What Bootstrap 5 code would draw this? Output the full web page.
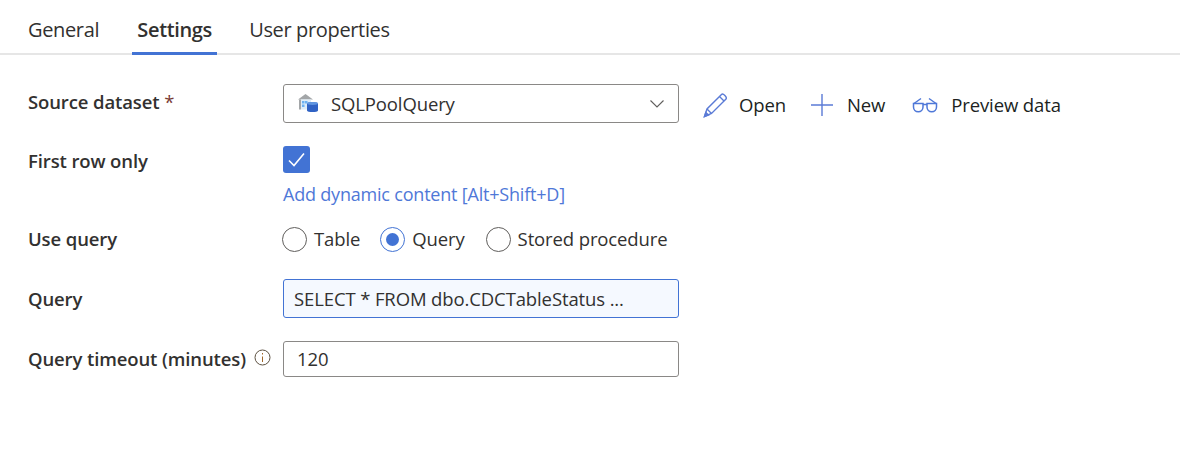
<!DOCTYPE html>
<html lang="en">
<head>
  <meta charset="UTF-8">
  <meta name="viewport" content="width=device-width, initial-scale=1.0">
  <title>Settings</title>
  <link href="https://cdn.jsdelivr.net/npm/bootstrap@5.3.0/dist/css/bootstrap.min.css" rel="stylesheet">
  <style>
    body {
      font-family: "Open Sans", "Liberation Sans", sans-serif;
      font-size: 18.5px;
      letter-spacing: -0.12px;
      color: #323130;
      background: #fff;
    }
    .tab-bar {
      height: 55px;
      padding-left: 14px;
      border-bottom: 2px solid #e6e6e6;
    }
    .tab-item {
      height: 55px;
      padding: 17px 14px 0;
      margin-right: 19px;
      color: #323130;
      font-size: 20px;
      letter-spacing: -0.35px;
      text-decoration: none;
      line-height: 26px;
    }
    .tab-item.on {
      font-weight: 600;
      border-bottom: 3px solid #4273d4;
      padding-left: 0;
      padding-right: 0;
      width: 85px;
      text-align: center;
      margin-right: 18px;
    }
    .form-area { padding: 29px 0 0 28px; }
    .field-label {
      width: 255px;
      flex: none;
      font-weight: 600;
      line-height: 24px;
      color: #323130;
    }
    .req { color: #7a3b36; font-weight: 400; }
    .ctl-box {
      width: 396px;
      flex: none;
      border: 1px solid #8a8886;
      border-radius: 3px;
      background: #fff;
      padding: 0 10px;
      line-height: 24px;
    }
    .row-source { height: 39px; margin-bottom: 23px; }
    .row-source .ctl-box { height: 39px; padding: 0 14px; }
    .row-check .field-label { margin-top: 3px; }
    .row-use { height: 24px; margin-top: 21px; }
    .row-query { height: 39px; margin-top: 28px; }
    .row-query .ctl-box { height: 39px; background: #f5f9ff; border-color: #4273d4; }
    .row-timeout { height: 36px; margin-top: 23px; }
    .row-timeout .ctl-box { height: 36px; padding-left: 13px; }
    .check-on {
      width: 27px;
      height: 27px;
      background: #4273d4;
      border-radius: 3px;
    }
    .dyn-link {
      display: block;
      margin-top: 9px;
      color: #4f78d8;
      font-size: 18px;
      letter-spacing: -0.2px;
      line-height: 24px;
      text-decoration: none;
    }
    .radio-group { margin-left: -1px; }
    .radio-dot {
      width: 25px;
      height: 25px;
      border: 1px solid #605e5c;
      border-radius: 50%;
      flex: none;
      background: #fff;
    }
    .radio-dot.on { border-color: #4273d4; }
    .radio-dot.on::after {
      content: "";
      width: 13px;
      height: 13px;
      border-radius: 50%;
      background: #4273d4;
    }
    .radio-text { margin-left: 7px; }
    .gap-table { margin-right: 20px; }
    .gap-query { margin-right: 21px; }
    .ds-icon { margin-right: 13px; }
    .action-link {
      color: #201f1e;
      text-decoration: none;
      line-height: 24px;
      padding-top: 2px;
    }
    .act-open { margin-left: 24px; }
    .act-open svg { margin-right: 10px; }
    .act-new { margin-left: 24px; }
    .act-new svg { margin-right: 13px; }
    .act-preview { margin-left: 27px; }
    .act-preview svg { margin-right: 13px; }
    .ctl-arrow { margin-left: auto; margin-right: 0; }
    .info-mark { margin-left: 8px; margin-bottom: 4px; }
  </style>
</head>
<body>

<nav class="tab-bar d-flex">
  <a class="tab-item" href="#">General</a>
  <a class="tab-item on" href="#">Settings</a>
  <a class="tab-item" href="#">User properties</a>
</nav>

<form class="form-area">
  <div class="row-source d-flex align-items-center">
    <label class="field-label mb-1">Source dataset <span class="req">*</span></label>
    <div class="ctl-box d-flex align-items-center">
      <svg class="ds-icon" width="20" height="20" viewBox="0 0 20 20">
        <path d="M0 5.500 L7.500 0 L15 5.500Z" fill="#a3a6a8"/>
        <rect x="1" y="5.500" width="2" height="10" fill="#a3a6a8"/>
        <rect x="3" y="5.500" width="10" height="10" fill="#dcecf8"/>
        <rect x="4" y="7" width="2.500" height="2.500" fill="#6cb2f2"/>
        <rect x="7" y="7" width="2.500" height="2.500" fill="#6cb2f2"/>
        <rect x="4" y="10.500" width="2.500" height="2.500" fill="#6cb2f2"/>
        <path d="M9 9.500 C9 7.800 20 7.800 20 9.500 L20 16.500 C20 18.500 9 18.500 9 16.500Z" fill="#2f62c4"/>
        <ellipse cx="14.500" cy="9.500" rx="5.500" ry="1.400" fill="#5f95e0"/>
      </svg>
      <span>SQLPoolQuery</span>
      <svg class="ctl-arrow" width="14" height="14" viewBox="0 0 14 14" fill="none" stroke="#605e5c" stroke-width="1.100">
        <path d="M0.500 3.500 L7 10 L13.500 3.500"/>
      </svg>
    </div>
    <a class="action-link act-open d-flex align-items-center" href="#">
      <svg width="26" height="26" viewBox="0 0 26 26" fill="none" stroke="#5b7bd6" stroke-width="1.400">
        <path d="M1.500 24.500 L4 17 L18.500 2.500 C20 1 24.500 5 23 7 L8.500 21.500Z"/>
        <path d="M4 17 L8.500 21.500 M16.500 4.500 L21 9"/>
        <path d="M1.500 24.500 L2.800 20.500 L5.500 23Z" fill="#5b7bd6"/>
      </svg>Open</a>
    <a class="action-link act-new d-flex align-items-center" href="#">
      <svg width="24" height="24" viewBox="0 0 24 24" fill="none" stroke="#5b7bd6" stroke-width="1.400">
        <path d="M12 1 V23 M1 12 H23"/>
      </svg>New</a>
    <a class="action-link act-preview d-flex align-items-center" href="#">
      <svg width="26" height="16" viewBox="0 0 26 16" fill="none" stroke="#4f78d8" stroke-width="1.500">
        <path d="M1.500 6.500 H11 V10 A4.750 4.750 0 0 1 1.500 10Z"/>
        <path d="M15 6.500 H24.500 V10 A4.750 4.750 0 0 1 15 10Z"/>
        <path d="M11 7.500 H15 M2 6.500 L9 1.500 M24 6.500 L17 1.500"/>
      </svg>Preview data</a>
  </div>

  <div class="row-check d-flex">
    <label class="field-label">First row only</label>
    <div>
      <div class="check-on d-flex align-items-center justify-content-center">
        <svg width="19" height="19" viewBox="0 0 19 19" fill="none" stroke="#fff" stroke-width="1.600">
          <path d="M2 10.500 L7 15.500 L17 3.500"/>
        </svg>
      </div>
      <a class="dyn-link" href="#">Add dynamic content [Alt+Shift+D]</a>
    </div>
  </div>

  <div class="row-use d-flex align-items-center">
    <label class="field-label">Use query</label>
    <div class="radio-group d-flex align-items-center">
      <span class="radio-dot"></span><span class="radio-text gap-table">Table</span>
      <span class="radio-dot on d-flex align-items-center justify-content-center"></span><span class="radio-text gap-query">Query</span>
      <span class="radio-dot"></span><span class="radio-text">Stored procedure</span>
    </div>
  </div>

  <div class="row-query d-flex align-items-center">
    <label class="field-label">Query</label>
    <div class="ctl-box d-flex align-items-center"><span>SELECT * FROM dbo.CDCTableStatus ...</span></div>
  </div>

  <div class="row-timeout d-flex align-items-center">
    <label class="field-label d-flex align-items-center">Query timeout (minutes)
      <svg class="info-mark" width="17" height="17" viewBox="0 0 17 17" fill="none" stroke="#5c5040">
        <circle cx="8.500" cy="8.500" r="7.500"/>
        <path d="M8.500 7.500 V13" stroke="#a0672a"/>
        <path d="M8.500 4 V5.500" stroke="#a0672a"/>
      </svg>
    </label>
    <div class="ctl-box d-flex align-items-center"><span>120</span></div>
  </div>
</form>

<script src="https://cdn.jsdelivr.net/npm/bootstrap@5.3.0/dist/js/bootstrap.bundle.min.js"></script>
</body>
</html>
